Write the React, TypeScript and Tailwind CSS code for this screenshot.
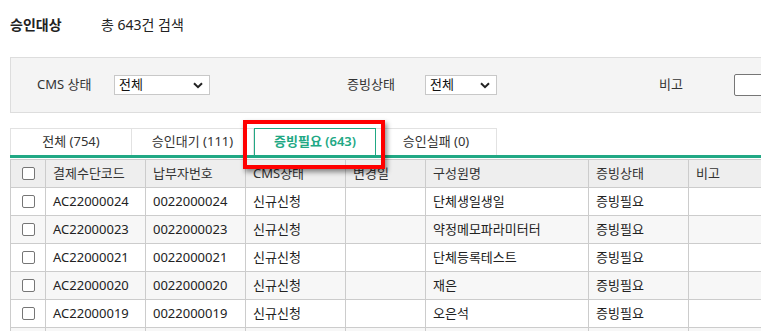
import React from "react";

const font = { fontFamily: '"Noto Sans", "Noto Sans CJK KR", sans-serif' };

const rows = [
  ["AC22000024", "0022000024", "신규신청", "", "단체생일생일", "증빙필요"],
  ["AC22000023", "0022000023", "신규신청", "", "약정메모파라미터터", "증빙필요"],
  ["AC22000021", "0022000021", "신규신청", "", "단체등록테스트", "증빙필요"],
  ["AC22000020", "0022000020", "신규신청", "", "재은", "증빙필요"],
  ["AC22000019", "0022000019", "신규신청", "", "오은석", "증빙필요"],
  ["", "", "", "", "", ""],
];

const cols = ["w-[100px]", "w-[100px]", "w-[100px]", "w-[80px]", "w-[163px]", "w-[100px]", "w-[120px]"];
const headers = ["결제수단코드", "납부자번호", "CMS상태", "변경일", "구성원명", "증빙상태", "비고"];

function Box() {
  return <div className="w-[13px] h-[13px] rounded-[2px] border border-[#767676] bg-white" />;
}

function Chevron() {
  return (
    <svg width="10" height="7" viewBox="0 0 10 7" className="mr-[6px]">
      <path d="M1 1.2 L5 5.2 L9 1.2" stroke="#222" strokeWidth="2" fill="none" />
    </svg>
  );
}

function Select({ w }: { w: string }) {
  return (
    <div className={`${w} shrink-0 h-[20px] border border-[#c8c8c8] bg-white flex items-center justify-between pl-[4px] text-[13px] text-[#111]`}>
      <span>전체</span>
      <Chevron />
    </div>
  );
}

export default function App() {
  return (
    <div className="w-[761px] h-[331px] overflow-hidden bg-white relative text-[#333]" style={font}>
      <div className="w-[900px] pl-[10px]">
        <div className="h-[50px] flex items-center pb-[2px]">
          <span className="text-[14px] font-bold text-[#222] w-[91px]">승인대상</span>
          <span className="text-[14px] text-[#222]">총 643건 검색</span>
        </div>
        <div className="mt-[7px] h-[56px] border border-[#dddddd] bg-[#f4f4f4] flex items-center text-[13px] text-[#333]">
          <span className="ml-[26px] w-[77px] shrink-0">CMS 상태</span>
          <Select w="w-[96px]" />
          <span className="ml-[137px] w-[78px] shrink-0">증빙상태</span>
          <Select w="w-[72px]" />
          <span className="ml-[162px] w-[75px] shrink-0">비고</span>
          <div className="w-[80px] shrink-0 h-[22px] border border-[#767676] rounded-[2px] bg-white" />
        </div>
        <div className="mt-[15px] flex h-[27px] text-[13px]">
          <div className="w-[122px] border border-b-0 border-[#e2e2e2] flex items-center justify-center text-[#333]">전체 (754)</div>
          <div className="w-[122px] border border-l-0 border-b-0 border-[#e2e2e2] flex items-center justify-center text-[#333]">승인대기 (111)</div>
          <div className="w-[122px] border border-b-0 border-[#21a884] flex items-center justify-center text-[#21a884] font-semibold">증빙필요 (643)</div>
          <div className="w-[121px] border border-l-0 border-b-0 border-[#e2e2e2] flex items-center justify-center text-[#333]">승인실패 (0)</div>
        </div>
        <div className="h-[3px] bg-[#21a884]" />
        <div className="mt-[1px] border-t border-l border-[#cccccc] text-[13px]">
          <div className="flex h-[28px] bg-[#eeeeee] border-b border-[#cccccc]">
            <div className="w-[35px] shrink-0 border-r border-[#cccccc] flex items-center justify-center">
              <Box />
            </div>
            {headers.map((h, i) => (
              <div key={h} className={`${cols[i]} shrink-0 border-r border-[#cccccc] flex items-center pl-[7px] text-[#333]`}>
                {h}
              </div>
            ))}
          </div>
          {rows.map((r, ri) => (
            <div key={ri} className={`flex h-[28px] border-b border-[#cccccc] ${ri % 2 === 1 ? "bg-[#f7f7f7]" : "bg-white"}`}>
              <div className="w-[35px] shrink-0 border-r border-[#cccccc] flex items-center justify-center">
                {ri < 5 && <Box />}
              </div>
              {[...r, ""].map((c, i) => (
                <div key={i} className={`${cols[i]} shrink-0 border-r border-[#cccccc] flex items-center pl-[7px] text-[#222]`}>
                  {c}
                </div>
              ))}
            </div>
          ))}
        </div>
      </div>
      <div className="absolute left-[243px] top-[120px] w-[142px] h-[49px] border-[4px] border-[#ff0000] shadow-[2px_3px_5px_rgba(0,0,0,0.45)]" />
    </div>
  );
}
